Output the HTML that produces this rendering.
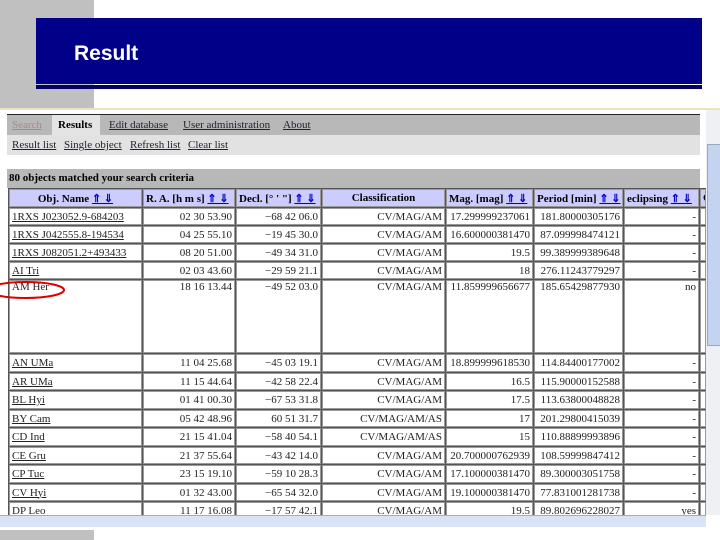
<!DOCTYPE html>
<html><head><meta charset="utf-8"><style>
body{margin:0;width:720px;height:540px;position:relative;background:#fff;overflow:hidden;font-family:"Liberation Serif",serif}
.g1{position:absolute;left:0;top:0;width:94px;height:108px;background:#c0c0c0}
.g2{position:absolute;left:0;top:530px;width:94px;height:10px;background:#c0c0c0}
.ban{position:absolute;left:36px;top:18px;width:666px;height:66px;background:#000088}
.ban span{position:absolute;left:38px;top:24px;color:#fff;font:bold 21px "Liberation Sans",sans-serif}
.bl{position:absolute;left:36px;top:85px;width:666px;height:4px;background:#000066}
.frame{position:absolute;left:0;top:108px;width:720px;height:418px;background:#fff;border-top:2px solid #e8e4c0;box-sizing:border-box}
.nav{position:absolute;left:7px;top:114px;width:693px;height:21px;background:#b8b8b8;border-top:1px solid #222;font-size:11px}
.nav a,.sub a{color:#223;text-decoration:underline;position:absolute;top:4px}
.sub{position:absolute;left:7px;top:135px;width:693px;height:20px;background:#e2e2e2;font-size:11px}
.cnt{position:absolute;left:7px;top:169px;width:693px;height:19px;background:#b8b8b8;font-size:11px;font-weight:bold}
.clip{position:absolute;left:0;top:188px;width:706px;height:327px;overflow:hidden}
table{position:absolute;left:8px;top:0;border-collapse:separate;border-spacing:1px;background:#555;table-layout:fixed;font-size:11px}
td{background:#fff;padding:0 2px;height:15px;text-align:right;white-space:nowrap;overflow:hidden;color:#222;border:1px solid #999}
tr.t td{height:16px}
td:first-child{text-align:left}
td:first-child span{text-decoration:underline}
th{background:#ccccff;height:16px;font-size:11px;white-space:nowrap;overflow:hidden;text-align:left;padding:0 2px;border:1px solid #999}
.ar{color:#00c;text-decoration:underline}
.vs{position:absolute;left:706px;top:110px;width:14px;height:405px;background:#eef0f4}
.hs{position:absolute;left:0;top:515px;width:706px;height:11px;background:#d8e4f4;border-top:1px solid #aab}
</style></head><body>
<div class="g1"></div><div class="g2"></div>
<div class="ban"><span>Result</span></div><div class="bl"></div>
<div class="frame"></div>
<div class="nav"><a style="left:5px;color:#a88">Search</a><b style="position:absolute;left:45px;top:0;height:21px;width:48px;background:#e4e4e4;padding:4px 6px 0;box-sizing:border-box;font-weight:bold">Results</b><a style="left:102px">Edit database</a><a style="left:176px">User administration</a><a style="left:276px">About</a></div>
<div class="sub"><a style="left:5px">Result list</a><a style="left:57px">Single object</a><a style="left:123px">Refresh list</a><a style="left:181px">Clear list</a></div>
<div class="cnt" style="padding:3px 2px;box-sizing:border-box">80 objects matched your search criteria</div>
<div class="clip">
<table style="width:699px">
<colgroup><col style="width:133px"><col style="width:92px"><col style="width:85px"><col style="width:123px"><col style="width:87px"><col style="width:89px"><col style="width:75px"><col style="width:6px"></colgroup>
<tr><th style="text-align:center">Obj. Name <span class="ar">⇑ ⇓</span></th><th>R. A. [h m s] <span class="ar">⇑ ⇓</span></th><th>Decl. [° ' "] <span class="ar">⇑ ⇓</span></th><th style="text-align:center">Classification</th><th>Mag. [mag] <span class="ar">⇑ ⇓</span></th><th>Period [min] <span class="ar">⇑ ⇓</span></th><th>eclipsing <span class="ar">⇑ ⇓</span></th><th>C</th></tr>
<tr><td><span>1RXS J023052.9-684203</span></td><td>02 30 53.90</td><td>−68 42 06.0</td><td>CV/MAG/AM</td><td>17.299999237061</td><td>181.80000305176</td><td>-</td><td></td></tr>
<tr><td><span>1RXS J042555.8-194534</span></td><td>04 25 55.10</td><td>−19 45 30.0</td><td>CV/MAG/AM</td><td>16.600000381470</td><td>87.099998474121</td><td>-</td><td></td></tr>
<tr><td><span>1RXS J082051.2+493433</span></td><td>08 20 51.00</td><td>−49 34 31.0</td><td>CV/MAG/AM</td><td>19.5</td><td>99.389999389648</td><td>-</td><td></td></tr>
<tr><td><span>AI Tri</span></td><td>02 03 43.60</td><td>−29 59 21.1</td><td>CV/MAG/AM</td><td>18</td><td>276.11243779297</td><td>-</td><td></td></tr>
<tr><td style="vertical-align:top;height:71px">AM Her</td><td style="vertical-align:top">18 16 13.44</td><td style="vertical-align:top">−49 52 03.0</td><td style="vertical-align:top">CV/MAG/AM</td><td style="vertical-align:top">11.859999656677</td><td style="vertical-align:top">185.65429877930</td><td style="vertical-align:top">no</td><td></td></tr>
<tr class="t"><td><span>AN UMa</span></td><td>11 04 25.68</td><td>−45 03 19.1</td><td>CV/MAG/AM</td><td>18.899999618530</td><td>114.84400177002</td><td>-</td><td></td></tr>
<tr><td><span>AR UMa</span></td><td>11 15 44.64</td><td>−42 58 22.4</td><td>CV/MAG/AM</td><td>16.5</td><td>115.90000152588</td><td>-</td><td></td></tr>
<tr class="t"><td><span>BL Hyi</span></td><td>01 41 00.30</td><td>−67 53 31.8</td><td>CV/MAG/AM</td><td>17.5</td><td>113.63800048828</td><td>-</td><td></td></tr>
<tr><td><span>BY Cam</span></td><td>05 42 48.96</td><td>60 51 31.7</td><td>CV/MAG/AM/AS</td><td>17</td><td>201.29800415039</td><td>-</td><td></td></tr>
<tr class="t"><td><span>CD Ind</span></td><td>21 15 41.04</td><td>−58 40 54.1</td><td>CV/MAG/AM/AS</td><td>15</td><td>110.88899993896</td><td>-</td><td></td></tr>
<tr><td><span>CE Gru</span></td><td>21 37 55.64</td><td>−43 42 14.0</td><td>CV/MAG/AM</td><td>20.700000762939</td><td>108.59999847412</td><td>-</td><td></td></tr>
<tr class="t"><td><span>CP Tuc</span></td><td>23 15 19.10</td><td>−59 10 28.3</td><td>CV/MAG/AM</td><td>17.100000381470</td><td>89.300003051758</td><td>-</td><td></td></tr>
<tr><td><span>CV Hyi</span></td><td>01 32 43.00</td><td>−65 54 32.0</td><td>CV/MAG/AM</td><td>19.100000381470</td><td>77.831001281738</td><td>-</td><td></td></tr>
<tr><td><span>DP Leo</span></td><td>11 17 16.08</td><td>−17 57 42.1</td><td>CV/MAG/AM</td><td>19.5</td><td>89.802696228027</td><td>yes</td><td></td></tr>
</table>
</div>
<div class="vs"><div style="position:absolute;left:1px;top:34px;width:12px;height:200px;background:#c4d4f0;border:1px solid #9ab"></div></div>
<div class="hs"></div>
<svg style="position:absolute;left:0;top:278px" width="70" height="24"><ellipse cx="26" cy="12" rx="38" ry="8" fill="none" stroke="#d00" stroke-width="2"/></svg>
</body></html>
